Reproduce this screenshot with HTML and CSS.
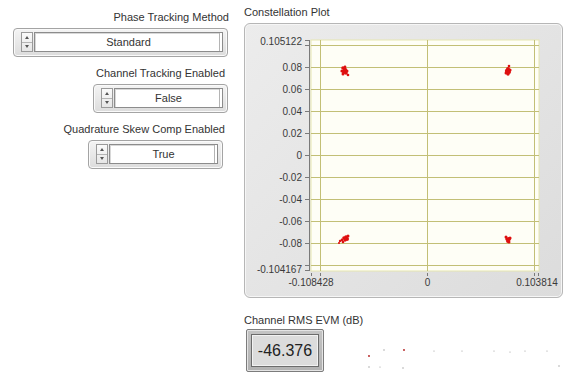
FILE: index.html
```html
<!DOCTYPE html>
<html>
<head>
  <meta charset="utf-8">
  <title>Constellation Plot</title>
  <link rel="stylesheet" href="styles.css">
</head>
<body>
  <div class="screen">

    <!-- Controles de la izquierda -->
    <div class="controls">
      <div class="ctl-label">Phase Tracking Method</div>
      <div class="ring ring-wide">
        <div class="spin"><span class="up"></span><span class="down"></span></div>
        <div class="field">Standard</div>
      </div>

      <div class="ctl-label ctl-label-in">Channel Tracking Enabled</div>
      <div class="ring ring-short">
        <div class="spin"><span class="up"></span><span class="down"></span></div>
        <div class="field">False</div>
      </div>

      <div class="ctl-label ctl-label-in">Quadrature Skew Comp Enabled</div>
      <div class="ring ring-short ring-last">
        <div class="spin"><span class="up"></span><span class="down"></span></div>
        <div class="field">True</div>
      </div>
    </div>

    <!-- Grafico y medida -->
    <div class="graph-col">
      <div class="graph-title">Constellation Plot</div>
      <div class="graph-panel">
        <svg class="plot" width="317" height="273" viewBox="0 0 317 273">
          <rect class="plot-bg" x="66" y="16" width="228" height="231"></rect>

          <!-- rejilla -->
          <g class="grid">
            <line x1="66" y1="21.5" x2="294" y2="21.5"></line>
            <line x1="66" y1="43.5" x2="294" y2="43.5"></line>
            <line x1="66" y1="65.5" x2="294" y2="65.5"></line>
            <line x1="66" y1="87.5" x2="294" y2="87.5"></line>
            <line x1="66" y1="109.5" x2="294" y2="109.5"></line>
            <line x1="66" y1="131.5" x2="294" y2="131.5"></line>
            <line x1="66" y1="153.5" x2="294" y2="153.5"></line>
            <line x1="66" y1="175.5" x2="294" y2="175.5"></line>
            <line x1="66" y1="197.5" x2="294" y2="197.5"></line>
            <line x1="66" y1="219.5" x2="294" y2="219.5"></line>
            <line x1="66" y1="241.5" x2="294" y2="241.5"></line>
            <line x1="75.5" y1="16" x2="75.5" y2="247"></line>
            <line x1="182.5" y1="16" x2="182.5" y2="247"></line>
            <line x1="289.5" y1="16" x2="289.5" y2="247"></line>
          </g>

          <!-- ejes -->
          <g class="axis">
            <line x1="64.5" y1="16" x2="64.5" y2="247"></line>
            <line x1="60" y1="16.5" x2="64" y2="16.5"></line>
            <line x1="60" y1="21.5" x2="64" y2="21.5"></line>
            <line x1="60" y1="43.5" x2="64" y2="43.5"></line>
            <line x1="60" y1="65.5" x2="64" y2="65.5"></line>
            <line x1="60" y1="87.5" x2="64" y2="87.5"></line>
            <line x1="60" y1="109.5" x2="64" y2="109.5"></line>
            <line x1="60" y1="131.5" x2="64" y2="131.5"></line>
            <line x1="60" y1="153.5" x2="64" y2="153.5"></line>
            <line x1="60" y1="175.5" x2="64" y2="175.5"></line>
            <line x1="60" y1="197.5" x2="64" y2="197.5"></line>
            <line x1="60" y1="219.5" x2="64" y2="219.5"></line>
            <line x1="60" y1="241.5" x2="64" y2="241.5"></line>
            <line x1="60" y1="246.5" x2="64" y2="246.5"></line>
            <line x1="66.5" y1="249" x2="66.5" y2="252"></line>
            <line x1="75.5" y1="249" x2="75.5" y2="252"></line>
            <line x1="182.5" y1="249" x2="182.5" y2="252"></line>
            <line x1="289.5" y1="249" x2="289.5" y2="252"></line>
            <line x1="293.5" y1="249" x2="293.5" y2="252"></line>
          </g>

          <g class="ylabels">
            <text x="57" y="17" dy="0.35em">0.105122</text>
            <text x="57" y="43.5" dy="0.35em">0.08</text>
            <text x="57" y="65.5" dy="0.35em">0.06</text>
            <text x="57" y="87.5" dy="0.35em">0.04</text>
            <text x="57" y="109.5" dy="0.35em">0.02</text>
            <text x="57" y="131.5" dy="0.35em">0</text>
            <text x="57" y="153.5" dy="0.35em">-0.02</text>
            <text x="57" y="175.5" dy="0.35em">-0.04</text>
            <text x="57" y="197.5" dy="0.35em">-0.06</text>
            <text x="57" y="219.5" dy="0.35em">-0.08</text>
            <text x="57" y="245" dy="0.35em">-0.104167</text>
          </g>
          <g class="xlabels">
            <text x="66" y="258" dy="0.35em">-0.108428</text>
            <text x="182.5" y="258" dy="0.35em">0</text>
            <text x="292" y="258" dy="0.35em">0.103814</text>
          </g>

          <!-- simbolos -->
          <g class="pts">
            <circle cx="98" cy="44" r="1.8"></circle>
            <circle cx="100" cy="46" r="2.2"></circle>
            <circle cx="99" cy="48" r="2"></circle>
            <circle cx="101" cy="49" r="1.8"></circle>
            <circle cx="97" cy="47" r="1.6"></circle>
            <circle cx="102" cy="47" r="1.5"></circle>
            <circle cx="100" cy="43" r="1.4"></circle>
            <circle cx="103" cy="51" r="1.3"></circle>
            <circle cx="98" cy="50" r="1.5"></circle>

            <circle cx="264" cy="42" r="1.3"></circle>
            <circle cx="263" cy="45" r="2"></circle>
            <circle cx="262" cy="47" r="2.2"></circle>
            <circle cx="264" cy="48" r="2"></circle>
            <circle cx="263" cy="50" r="1.7"></circle>
            <circle cx="261" cy="49" r="1.5"></circle>
            <circle cx="265" cy="46" r="1.6"></circle>

            <circle cx="95" cy="217" r="1.2"></circle>
            <circle cx="97" cy="216" r="1.4"></circle>
            <circle cx="99" cy="214" r="1.8"></circle>
            <circle cx="101" cy="213" r="1.8"></circle>
            <circle cx="102" cy="215" r="2"></circle>
            <circle cx="100" cy="216" r="1.7"></circle>
            <circle cx="98" cy="218" r="1.3"></circle>
            <circle cx="103" cy="212" r="1.5"></circle>
            <circle cx="94" cy="219" r="1.1"></circle>

            <circle cx="261" cy="213" r="1.5"></circle>
            <circle cx="262" cy="215" r="1.8"></circle>
            <circle cx="264" cy="215" r="2"></circle>
            <circle cx="263" cy="217" r="2"></circle>
            <circle cx="265" cy="214" r="1.6"></circle>
            <circle cx="264" cy="218" r="1.5"></circle>
          </g>
        </svg>
      </div>

      <div class="evm-label">Channel RMS EVM (dB)</div>
      <div class="evm-row">
        <div class="evm-ring">
          <div class="evm-val">-46.376</div>
        </div>
        <svg class="specks" width="200" height="26" viewBox="0 0 200 26">
          <circle class="sp-red" cx="7" cy="12" r="0.9"></circle>
          <circle class="sp-red" cx="42" cy="6" r="0.9"></circle>
          <circle cx="22" cy="6" r="0.7"></circle>
          <circle cx="7" cy="23" r="0.7"></circle>
          <circle cx="18" cy="23" r="0.6"></circle>
          <circle cx="41" cy="24" r="0.7"></circle>
          <circle cx="72" cy="7" r="0.6"></circle>
          <circle cx="100" cy="7" r="0.6"></circle>
          <circle cx="132" cy="7" r="0.6"></circle>
          <circle cx="148" cy="8" r="0.6"></circle>
          <circle cx="163" cy="7" r="0.6"></circle>
          <circle cx="185" cy="7" r="0.6"></circle>
          <circle cx="197" cy="22" r="0.7"></circle>
        </svg>
      </div>
    </div>

  </div>
</body>
</html>
```

FILE: styles.css
```css
/* Reset */
* {
  margin: 0;
  padding: 0;
  box-sizing: border-box;
}

body {
  background: #fff;
  font-family: "Liberation Sans", Arial, sans-serif;
  font-size: 11px;
  color: #333;
}

.screen {
  display: flex;
  width: 568px;
  height: 379px;
  overflow: hidden;
}

/* COLUMNA DE CONTROLES */
.controls {
  width: 229px;
  padding-top: 11px;
  display: flex;
  flex-direction: column;
  align-items: flex-end;
}

.ctl-label {
  line-height: 13px;
  white-space: nowrap;
}

.ctl-label-in {
  margin-top: 10px;
  margin-right: 4px;
}

.ring {
  display: flex;
  gap: 1px;
  height: 29px;
  margin-top: 4px;
  margin-right: 1px;
  padding: 3px 4px 4px 7px;
  border: 1px solid #a4a4a4;
  border-radius: 4px;
  background: linear-gradient(#f4f4f4, #dcdcdc);
  box-shadow: inset 0 0 0 1px #fafafa;
}

.ring-wide { width: 215px; }
.ring-short { width: 135px; }
.ring-last { margin-right: 6px; }

.spin {
  width: 12px;
  display: flex;
  flex-direction: column;
  border: 1px solid #9a9a9a;
  background: linear-gradient(#fafafa, #e6e6e6);
}

.spin span {
  flex: 1;
  display: flex;
  align-items: center;
  justify-content: center;
}

.spin .down {
  border-top: 1px solid #b4b4b4;
}

.spin .up::before {
  content: "";
  border-left: 2.5px solid transparent;
  border-right: 2.5px solid transparent;
  border-bottom: 3px solid #555;
}

.spin .down::before {
  content: "";
  border-left: 2.5px solid transparent;
  border-right: 2.5px solid transparent;
  border-top: 3px solid #555;
}

.field {
  flex: 1;
  background: #fff;
  border: 1px solid #8c8c8c;
  box-shadow: inset -2px 0 0 #fff, inset -3px 0 0 #b4b4b4, inset 1px 1px 0 #d8d8d8;
  text-align: center;
  line-height: 18px;
  color: #333;
}

/* COLUMNA DEL GRAFICO */
.graph-col {
  margin-left: 15px;
  padding-top: 6px;
  display: flex;
  flex-direction: column;
}

.graph-title {
  line-height: 13px;
}

.graph-panel {
  width: 319px;
  height: 275px;
  margin-top: 4px;
  border: 1px solid #b6b6b6;
  border-radius: 6px;
  background: linear-gradient(135deg, #ececec, #dcdcdc);
  box-shadow: inset 0 0 0 1px #f6f6f6;
  overflow: hidden;
}

.plot {
  display: block;
}

.plot-bg {
  fill: #fefef6;
  stroke: #e6e6b0;
  stroke-width: 1;
}

.grid line {
  stroke: #c2bf76;
  stroke-width: 1;
}

.axis line {
  stroke: #7a7a7a;
  stroke-width: 1;
}

.ylabels text,
.xlabels text {
  font-family: "Liberation Sans", Arial, sans-serif;
  font-size: 10px;
  fill: #3a3a3a;
}

.ylabels text { text-anchor: end; }
.xlabels text { text-anchor: middle; }

.pts circle {
  fill: #de1010;
}

/* INDICADOR EVM */
.evm-label {
  margin-top: 16px;
  line-height: 13px;
}

.evm-row {
  display: flex;
  align-items: flex-start;
  margin-top: 2px;
}

.evm-ring {
  width: 78px;
  height: 43px;
  margin-left: 2px;
  padding: 4px;
  border: 1px solid #7c7c7c;
  border-radius: 2px;
  background: linear-gradient(#c4c4c4, #b2b2b2);
  box-shadow: inset 0 0 0 1px #e4e4e4;
}

.evm-val {
  height: 100%;
  border: 1px solid #6c6c6c;
  background: #dcdcdc;
  box-shadow: inset 0 0 0 1px #f2f2f2;
  font-size: 16px;
  line-height: 31px;
  text-align: center;
  color: #222;
}

.specks {
  margin-top: 15px;
  margin-left: 38px;
}

.specks circle {
  fill: #9a9a9a;
}

.specks .sp-red {
  fill: #b01818;
}
```
